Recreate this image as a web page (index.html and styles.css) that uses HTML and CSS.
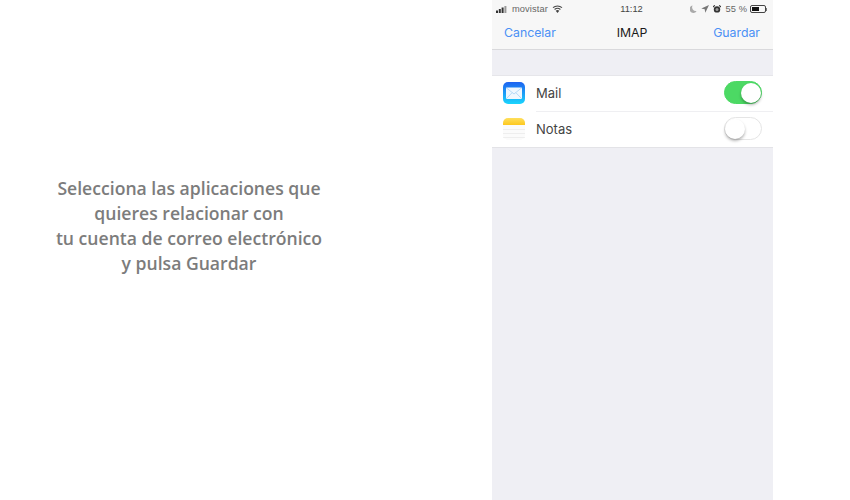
FILE: index.html
```html
<!DOCTYPE html>
<html lang="es">
<head>
<meta charset="utf-8">
<title>IMAP</title>
<link rel="stylesheet" href="styles.css">
</head>
<body>
<main class="page">
  <section class="caption">
    <p class="caption-text">Selecciona las aplicaciones que<br>quieres relacionar con<br>tu cuenta de correo electrónico<br>y pulsa Guardar</p>
  </section>
  <section class="phone">
    <header class="chrome">
      <div class="status">
        <div class="status-side">
          <svg class="signal" width="13" height="7" viewBox="0 0 13 7"><rect x="0" y="4.5" width="2" height="2.5" fill="#333"/><rect x="2.8" y="3" width="2" height="4" fill="#333"/><rect x="5.6" y="1.5" width="2" height="5.5" fill="#333"/><rect x="8.4" y="0" width="2" height="7" fill="#999"/></svg>
          <span class="status-text">movistar</span>
          <svg class="wifi" width="11" height="8" viewBox="0 0 11 8"><path d="M5.5 8 3.7 5.8a2.8 2.8 0 0 1 3.6 0Z" fill="#444"/><path d="M2.6 4.5a4.4 4.4 0 0 1 5.8 0M1 2.7a6.8 6.8 0 0 1 9 0" fill="none" stroke="#444" stroke-width="1.1"/></svg>
        </div>
        <span class="status-time">11:12</span>
        <div class="status-side status-right">
          <svg width="7" height="8" viewBox="0 0 7 8"><path d="M2.6.4A3.8 3.8 0 0 0 6.6 6 3.8 3.8 0 1 1 2.6.4Z" fill="#aaa"/></svg>
          <svg class="arrow" width="8" height="8" viewBox="0 0 8 8"><path d="M8 0 .3 3.6l3.4.6.6 3.6Z" fill="#777"/></svg>
          <svg width="8" height="8" viewBox="0 0 8 8"><circle cx="4" cy="4.4" r="3.2" fill="#333"/><circle cx="4" cy="4.4" r="1.5" fill="#999"/><path d="M0 2 1.8 .3M8 2 6.2 .3" stroke="#333" stroke-width="1.1"/></svg>
          <span class="status-text">55 %</span>
          <div class="battery"><div class="battery-level"></div></div>
          <div class="battery-tip"></div>
        </div>
      </div>
      <nav class="nav">
        <span class="nav-action">Cancelar</span>
        <span class="nav-title">IMAP</span>
        <span class="nav-action nav-action-end">Guardar</span>
      </nav>
    </header>
    <ul class="list">
      <li class="row">
        <svg class="app-icon" width="22" height="22" viewBox="0 0 22 22">
          <defs><linearGradient id="mailbg" x1="0" y1="0" x2="0" y2="1"><stop offset="0" stop-color="#1d62f0"/><stop offset="1" stop-color="#1ad5fd"/></linearGradient></defs>
          <rect width="22" height="22" rx="5" fill="url(#mailbg)"/>
          <rect x="3" y="5.5" width="16" height="11.5" rx="1" fill="#f0f7fe"/>
          <path d="M3.3 5.8 11 12l7.7-6.2M3.3 16.7l5.8-6M18.7 16.7l-5.8-6" fill="none" stroke="#9ccbf4" stroke-width=".7"/>
        </svg>
        <span class="row-label">Mail</span>
        <div class="switch switch-on"><div class="knob"></div></div>
      </li>
      <li class="row">
        <svg class="app-icon" width="22" height="22" viewBox="0 0 22 22">
          <defs><linearGradient id="notesbg" x1="0" y1="0" x2="0" y2="1"><stop offset="0" stop-color="#ffdf5c"/><stop offset="1" stop-color="#fdc81f"/></linearGradient></defs>
          <rect width="22" height="22" rx="5" fill="#fbfbfb"/>
          <path d="M0 7V5a5 5 0 0 1 5-5h12a5 5 0 0 1 5 5v2Z" fill="url(#notesbg)"/>
          <path d="M0 11.5h22M0 15.5h22M0 19.5h22" stroke="#e6e6e6" stroke-width=".6"/>
        </svg>
        <span class="row-label">Notas</span>
        <div class="switch"><div class="knob"></div></div>
      </li>
    </ul>
  </section>
</main>
</body>
</html>
```
FILE: styles.css
```css
* { box-sizing: border-box; }
html, body { margin: 0; height: 100%; background: #fff; }
.page { display: flex; width: 850px; height: 500px; overflow: hidden; }
.caption { width: 492px; padding: 176px 114px 0 0; flex: none; }
.caption-text {
  margin: 0;
  font: 600 17.6px/25px "Open Sans", "Liberation Sans", sans-serif;
  color: #7c7c7c;
  text-align: center;
  white-space: nowrap;
}
.phone {
  width: 281px;
  flex: none;
  background: #efeff4;
}
.chrome { background: #f7f7f7; border-bottom: 1px solid #d9d9dc; height: 50px; }
.status {
  height: 17px;
  padding: 1px 6px 0 4px;
  display: grid;
  grid-template-columns: 1fr auto 1fr;
  align-items: center;
}
.status-side { display: flex; align-items: center; gap: 3px; }
.status-right { justify-content: flex-end; gap: 4px; }
.status-text { font: 9.3px/12px "Liberation Sans", sans-serif; color: #666; letter-spacing: .1px; }
.status-time { font: 9.3px/12px "Liberation Sans", sans-serif; color: #444; }
.wifi { margin-left: 1px; }
.battery { width: 16px; height: 8px; border: 1px solid #444; border-radius: 2px; padding: 1px; margin-left: -1px; }
.battery-level { width: 55%; height: 100%; background: #111; }
.battery-tip { width: 1px; height: 3px; background: #777; margin-left: -4px; }
.nav {
  height: 32px;
  padding: 0 13px 0 12px;
  display: grid;
  grid-template-columns: 1fr auto 1fr;
  align-items: center;
}
.nav-action { font: 400 12.3px/16px Inter, "Liberation Sans", sans-serif; color: #4a90f5; }
.nav-action-end { text-align: right; }
.nav-title { font: 400 12.3px/16px Inter, "Liberation Sans", sans-serif; color: #1a1a1a; }
.list { list-style: none; margin: 25px 0 0; padding: 0; background: #fff; border-bottom: 1px solid #e3e3e7; }
.row { height: 36px; display: flex; align-items: center; padding: 0 11px; position: relative; }
.row::before { content: ""; position: absolute; top: 0; left: 0; right: 0; height: 1px; background: #e6e6ea; }
.row + .row::before { left: 44px; background: #efeff2; }
.app-icon { flex: none; }
.row-label { margin-left: 11px; flex: 1; font: 400 13px/18px Inter, "Liberation Sans", sans-serif; color: #444; }
.switch {
  width: 38px;
  height: 23px;
  margin-top: -1px;
  border-radius: 12px;
  border: 1.5px solid #e5e5e5;
  background: #fff;
  display: flex;
  align-items: center;
}
.switch-on { background: #4cd964; border-color: #4cd964; justify-content: flex-end; }
.knob { width: 20px; height: 20px; border-radius: 50%; background: #fff; box-shadow: 0 2px 3px rgba(0,0,0,.3); }
```
